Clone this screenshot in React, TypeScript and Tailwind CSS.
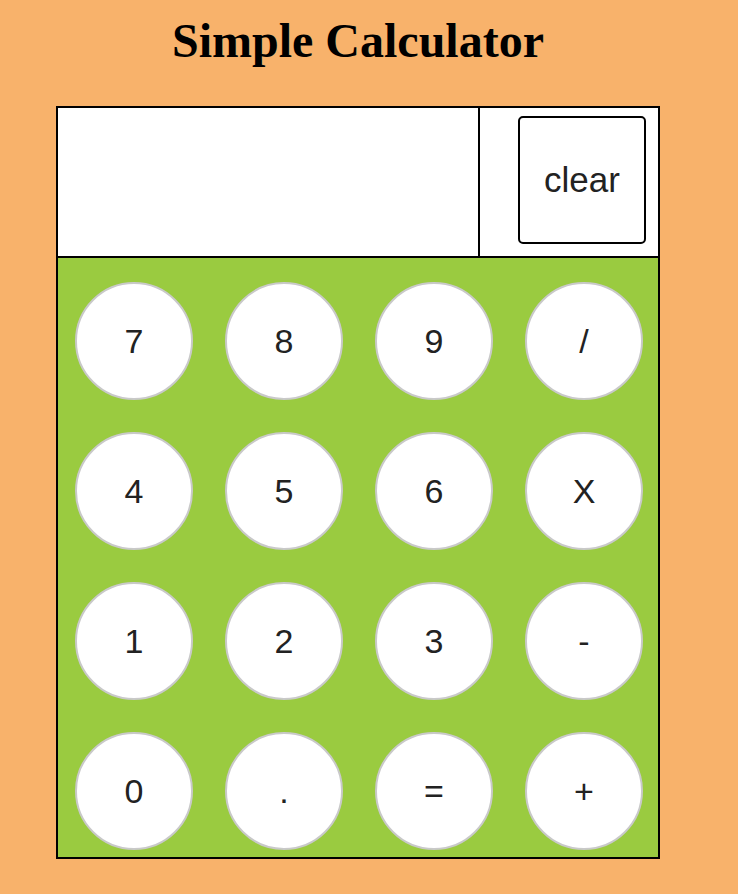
import React from "react";

const keys = ["7", "8", "9", "/", "4", "5", "6", "X", "1", "2", "3", "-", "0", ".", "=", "+"];

export default function App() {
  return (
    <div className="min-h-[894px] w-full bg-[#F8B26B] pt-[14px]">
      <div className="ml-[56px] w-[604px]">
        <h1 className="text-center font-bold text-[48px] leading-[53px] text-black font-['Liberation_Serif',serif] mb-[39px]">
          Simple Calculator
        </h1>
        <div className="border-2 border-black">
          <div className="flex h-[150px] bg-white border-b-2 border-black">
            <div className="w-[422px] border-r-2 border-black" />
            <div className="flex-1 pl-[38px] pt-[8px]">
              <button className="w-[128px] h-[128px] border-2 border-black rounded-[5px] bg-white text-[35px] text-[#222] font-['Liberation_Sans',sans-serif]">
                clear
              </button>
            </div>
          </div>
          <div className="bg-[#9ACB40] grid grid-cols-[repeat(4,118px)] gap-x-[32px] gap-y-[32px] pl-[17px] pr-[15px] pt-[24px] pb-[7px]">
            {keys.map((k) => (
              <button
                key={k}
                className="w-[118px] h-[118px] rounded-full bg-white border-2 border-[#c9c9c9] text-[34px] text-[#222] font-['Liberation_Sans',sans-serif] flex items-center justify-center"
              >
                {k}
              </button>
            ))}
          </div>
        </div>
      </div>
    </div>
  );
}
